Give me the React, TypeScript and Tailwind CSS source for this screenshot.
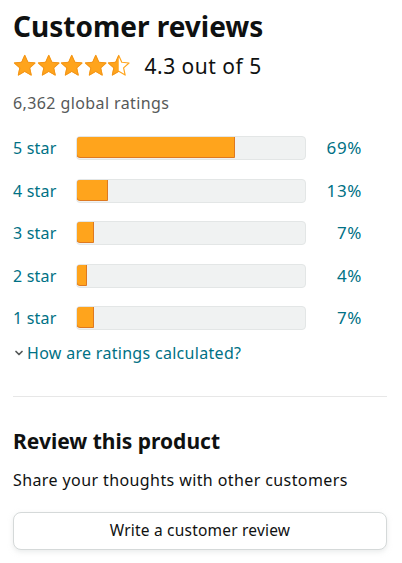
import { ChevronDown } from 'lucide-react';

const rows = [
  { label: '5 star', pct: 69 },
  { label: '4 star', pct: 13 },
  { label: '3 star', pct: 7 },
  { label: '2 star', pct: 4 },
  { label: '1 star', pct: 7 },
];

const STAR = 'M12 1.5l3.09 6.9 7.41.78-5.55 4.98 1.58 7.34L12 17.7l-6.53 3.8 1.58-7.34L1.5 9.18l7.41-.78z';

const Star = ({ fill }: { fill: number }) => (
  <svg viewBox="0 0 24 24" className="w-[23.5px] h-[23.5px]">
    <defs>
      <clipPath id={`c${fill}`}>
        <rect x="0" y="0" width={24 * fill} height="24" />
      </clipPath>
    </defs>
    <path d={STAR} fill="#fff" stroke="#FFA41C" strokeWidth="1.2" strokeLinejoin="round" />
    <path d={STAR} fill="#FFA41C" stroke="#F2951A" strokeWidth="1" strokeLinejoin="round" clipPath={`url(#c${fill})`} />
  </svg>
);

const App = () => {
  return (
    <div className="w-[402px] h-[563px] bg-white pl-[13px] pr-[15px] pt-[8px] font-['Noto_Sans',sans-serif] text-[#0F1111]">
      <h2 className="text-[28px] font-bold leading-[36px]">Customer reviews</h2>
      <div className="flex items-center gap-[14px] mt-[9px] h-[26px]">
        <div className="flex">
          <Star fill={1} />
          <Star fill={1} />
          <Star fill={1} />
          <Star fill={1} />
          <Star fill={0.5} />
        </div>
        <span className="text-[21px] leading-[26px] tracking-[0.5px]">4.3 out of 5</span>
      </div>
      <div className="text-[16px] text-[#565959] mt-[13px] leading-[22px] tracking-[0.4px]">6,362 global ratings</div>

      <div className="flex flex-col gap-[18.5px] mt-[22px]">
        {rows.map((r) => (
          <div key={r.label} className="flex items-center h-[24px] text-[16px] text-[#007185] tracking-[0.2px]">
            <span className="w-[63px]">{r.label}</span>
            <div className="w-[230px] h-[24px] rounded-[4px] bg-[#F0F2F2] border border-[#E3E6E6] overflow-hidden">
              <div
                className="h-full bg-[#FFA41C] border border-[#DE7921] rounded-l-[4px] -m-px"
                style={{ width: `calc(${r.pct}% + 2px)` }}
              />
            </div>
            <span className="w-[56px] text-right text-[17px] tracking-[0.6px]">{r.pct}%</span>
          </div>
        ))}
      </div>

      <div className="flex items-center mt-[11px] text-[16px] text-[#007185] leading-[24px] tracking-[0.3px]">
        <ChevronDown className="w-[12px] h-[12px] text-[#565959] mr-[2px]" strokeWidth={3.5} />
        <span>How are ratings calculated?</span>
      </div>

      <div className="h-px bg-[#E7E7E7] mt-[31px]" />

      <h3 className="text-[21px] font-bold leading-[28px] mt-[30px]">Review this product</h3>
      <p className="text-[16px] leading-[22px] mt-[14px] tracking-[0.4px]">Share your thoughts with other customers</p>
      <button className="w-full h-[38px] mt-[21px] rounded-[8px] border border-[#D5D9D9] bg-white shadow-[0_2px_5px_0_rgba(213,217,217,0.5)] text-[15.5px] text-[#0F1111] tracking-[0.2px]">
        Write a customer review
      </button>
    </div>
  );
};

export default App;
